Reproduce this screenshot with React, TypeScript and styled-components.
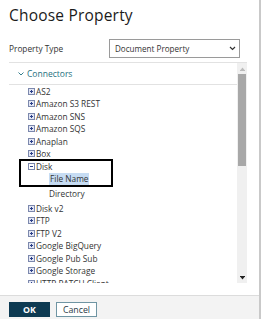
import React from "react";
import styled, { createGlobalStyle } from "styled-components";

const Global = createGlobalStyle`
  html, body { margin: 0; padding: 0; background: #fff; }
  body { font-family: "Open Sans", "Noto Sans", sans-serif; }
  * { box-sizing: border-box; }
`;

const Dialog = styled.div`
  width: 261px;
  height: 319px;
  display: flex;
  flex-direction: column;
  border-right: 2px solid #c9c9c9;
  background: #fff;
  overflow: hidden;
`;

const Title = styled.h1`
  margin: 0;
  padding: 4px 9px 0;
  height: 35px;
  font-family: "Open Sans", "Lato", sans-serif;
  font-weight: 400;
  font-size: 15.5px;
  letter-spacing: 0.2px;
  color: #1b1b1b;
`;

const FormRow = styled.div`
  display: flex;
  align-items: center;
  justify-content: space-between;
  padding: 3px 19px 0 9px;
  height: 23px;
`;

const Label = styled.span`
  font-size: 8.3px;
  color: #333;
`;

const Select = styled.div`
  width: 131px;
  height: 19px;
  border: 1px solid #9a9a9a;
  display: flex;
  align-items: center;
  justify-content: space-between;
  padding: 0 3px 0 5px;
  font-size: 8.1px;
  color: #333;
`;

const TreeBox = styled.div`
  margin: 4px 0 0 9px;
  width: 238px;
  height: 221px;
  border-top: 1px solid #e2e2e2;
  display: flex;
`;

const TreeList = styled.div`
  flex: 1;
  overflow: hidden;
`;

const Group = styled.div`
  display: flex;
  align-items: center;
  height: 22px;
  padding-left: 9px;
  gap: 3px;
  border-bottom: 1px solid #e2e2e2;
  color: #1e7080;
  font-size: 8.5px;
`;

const Row = styled.div<{ $indent: number; $h?: number }>`
  display: flex;
  align-items: center;
  height: ${(p) => p.$h ?? 12.5}px;
  padding-left: ${(p) => p.$indent}px;
  font-size: 8.3px;
  color: #333;
  white-space: nowrap;
`;

const Selected = styled.span`
  background: #c6dcf3;
  padding: 0 1px;
  line-height: 12px;
`;

const Highlight = styled.div`
  margin-left: 11px;
  width: 92px;
  outline: 2px solid #000;
  outline-offset: -1px;
`;

const ScrollBar = styled.div`
  width: 10px;
  background: #f0f0f0;
  display: flex;
  flex-direction: column;
  align-items: center;
`;

const ArrowBtn = styled.div`
  height: 11px;
  width: 10px;
  display: flex;
  align-items: center;
  justify-content: center;
`;

const Thumb = styled.div`
  width: 8px;
  height: 92px;
  background: #a8a8a8;
`;

const Spacer = styled.div`
  flex: 1;
`;

const Footer = styled.div`
  margin-top: 12px;
  flex: 1;
  border-top: 1px solid #dcdcdc;
  background: #f3f3f3;
  display: flex;
  align-items: flex-start;
  gap: 6px;
  padding: 6px 9px 0;
`;

const Button = styled.button<{ $primary?: boolean }>`
  width: 41px;
  height: 15px;
  padding: 0;
  font-family: "Open Sans", sans-serif;
  font-size: 8.8px;
  font-weight: ${(p) => (p.$primary ? 700 : 400)};
  color: ${(p) => (p.$primary ? "#fff" : "#2b3a45")};
  background: ${(p) => (p.$primary ? "#0d3a52" : "#fff")};
  border: 1px solid ${(p) => (p.$primary ? "#0d3a52" : "#6f95a3")};
  display: flex;
  align-items: center;
  justify-content: center;
`;

const Box = ({ minus }: { minus?: boolean }) => (
  <svg width="7" height="7" viewBox="0 0 7 7" style={{ marginRight: 1, flex: "none" }}>
    <rect x="0.5" y="0.5" width="6" height="6" fill={minus ? "#fff" : "#e2e6f4"} stroke="#7c88ad" strokeWidth="1" />
    <path d={minus ? "M2 3.5h3" : "M2 3.5h3M3.5 2v3"} stroke="#2b3f88" strokeWidth="1" />
  </svg>
);

const before = ["AS2", "Amazon S3 REST", "Amazon SNS", "Amazon SQS", "Anaplan", "Box"];
const after = ["Disk v2", "FTP", "FTP V2", "Google BigQuery", "Google Pub Sub", "Google Storage", "HTTP PATCH Client"];

export default function App() {
  return (
    <>
      <Global />
      <Dialog>
        <Title>Choose Property</Title>
        <FormRow>
          <Label>Property Type</Label>
          <Select>
            <span>Document Property</span>
            <svg width="7" height="5" viewBox="0 0 7 5">
              <path d="M1 1l2.5 2.5L6 1" stroke="#333" strokeWidth="1.2" fill="none" />
            </svg>
          </Select>
        </FormRow>
        <TreeBox>
          <TreeList>
            <Group>
              <svg width="6" height="4" viewBox="0 0 6 4">
                <path d="M0.5 0.5l2.5 2.5L5.5 0.5" stroke="#1e7080" strokeWidth="0.9" fill="none" />
              </svg>
              Connectors
            </Group>
            {before.map((t) => (
              <Row key={t} $indent={19}>
                <Box />
                {t}
              </Row>
            ))}
            <Highlight>
              <Row $indent={8}>
                <Box minus />
                Disk
              </Row>
              <Row $indent={29} $h={13}>
                <Selected>File Name</Selected>
              </Row>
            </Highlight>
            <Row $indent={40} $h={16.25}>Directory</Row>
            {after.map((t) => (
              <Row key={t} $indent={19}>
                <Box />
                {t}
              </Row>
            ))}
          </TreeList>
          <ScrollBar>
            <ArrowBtn>
              <svg width="5" height="4" viewBox="0 0 5 4">
                <path d="M0.5 3L2.5 0.5L4.5 3z" fill="#bbb" />
                <path d="M0 3.5h5" stroke="#bbb" strokeWidth="1" />
              </svg>
            </ArrowBtn>
            <Thumb />
            <Spacer />
            <ArrowBtn>
              <svg width="5" height="4" viewBox="0 0 5 4">
                <path d="M0 0.5h5" stroke="#222" strokeWidth="1" />
                <path d="M0.5 1L2.5 3.5L4.5 1z" fill="#222" />
              </svg>
            </ArrowBtn>
          </ScrollBar>
        </TreeBox>
        <Footer>
          <Button $primary>OK</Button>
          <Button>Cancel</Button>
        </Footer>
      </Dialog>
    </>
  );
}
